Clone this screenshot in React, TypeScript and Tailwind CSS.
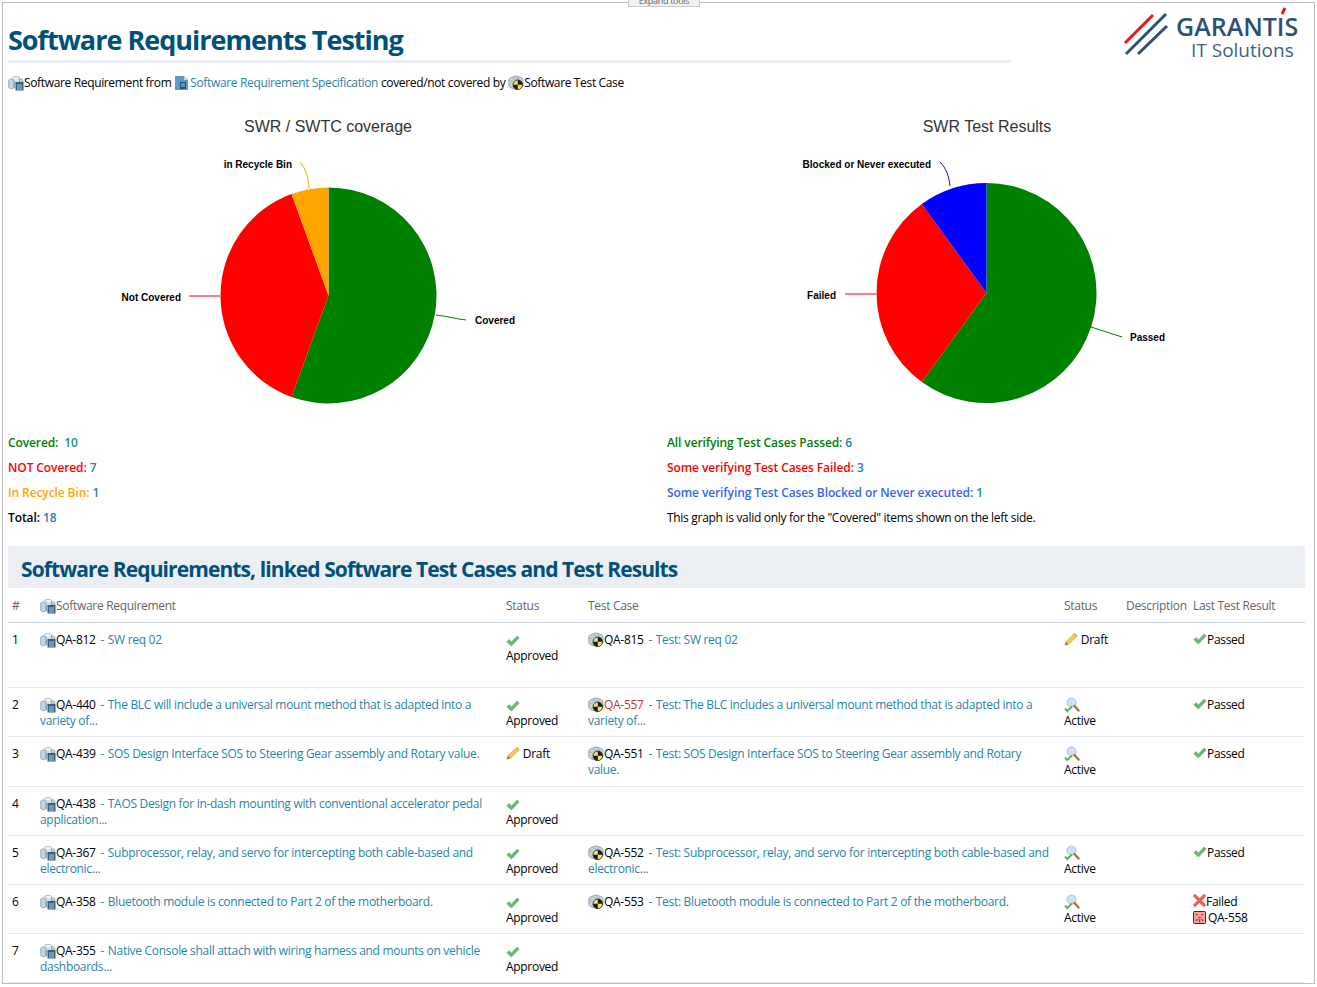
import type { ReactNode } from "react";

const FONT = "font-['Open_Sans','Liberation_Sans',sans-serif]";

function ReqIcon() {
  return (
    <svg viewBox="0 0 16 16" className="inline-block h-4 w-4 shrink-0 align-[-4px]">
      <path d="M.7 5.500C.7 3.500 6 3.500 6 5.500v7c0 1.600-5.300 1.600-5.300 0z" fill="#c4d5e2" stroke="#7d98ad" strokeWidth=".7" />
      <path d="M4.500 3C4.500 1 11.500 1 11.500 3v5h-5v5H6V5.500C6 4.300 4.500 4 4.500 3z" fill="#d6e3ec" stroke="#7d98ad" strokeWidth=".7" />
      <ellipse cx="8" cy="3" rx="3" ry="1.200" fill="#eef4f8" />
      <path d="M11.500 4C13 3.500 15 4 15 5.500V7h-3.500z" fill="#c4d5e2" stroke="#7d98ad" strokeWidth=".6" />
      <rect x="7.500" y="7" width="8" height="8.500" fill="#33607f" />
      <path d="M9 10h5M9 12h5M9 14h5" stroke="#dfeaf2" strokeWidth=".8" />
    </svg>
  );
}

function TestIcon() {
  return (
    <svg viewBox="0 0 16 16" className="inline-block h-4 w-4 shrink-0 align-[-4px]">
      <path d="M.8 5C.8 3 4 2 5 2 6 .8 10 .8 11 2c1.500 0 4 1 4 3v5c0 2-3 4-7 4-4 0-7.200-2-7.200-4z" fill="#c7d3dc" stroke="#76899a" strokeWidth=".7" />
      <path d="M5 2.500c0 2 6 2 6 0M1 5.500c1 1 3 1 3.500.5" fill="none" stroke="#8a9cab" strokeWidth=".6" />
      <circle cx="9.800" cy="9.800" r="4.800" fill="#efe26a" stroke="#1c1c1c" strokeWidth=".8" />
      <path d="M9.800 9.800V5a4.800 4.800 0 0 1 4.800 4.800zM9.800 9.800v4.800A4.800 4.800 0 0 1 5 9.800z" fill="#1c1c1c" />
    </svg>
  );
}

function SpecIcon() {
  return (
    <svg viewBox="0 0 16 16" className="inline-block h-4 w-4 shrink-0 align-[-4px]">
      <path d="M1 1h9l4 4v10H1z" fill="#5b9dc9" />
      <path d="M10 1v4h4z" fill="#b8d8ee" />
      <rect x="6" y="7" width="6" height="7" fill="#2b4f6d" />
      <path d="M7 9h4M7 11h4" stroke="#dbe7f0" strokeWidth=".8" />
    </svg>
  );
}

function CheckIcon({ className = "" }: { className?: string }) {
  return (
    <svg viewBox="0 0 14 12" className={`inline-block h-[12px] w-[14px] shrink-0 ${className}`}>
      <path d="M.8 6.800 3 4.600l2.400 2.300L11.200 1l2 2-7.800 8z" fill="#6ab972" stroke="#559f5e" strokeWidth=".5" />
    </svg>
  );
}

function PencilIcon() {
  return (
    <svg viewBox="0 0 16 16" className="inline-block h-[14px] w-[14px] shrink-0 align-[-2px]">
      <path d="M1 15l1.200-4L11.500 2l3 3-9.300 9z" fill="#f2c75c" stroke="#d29f3c" strokeWidth=".7" />
      <path d="M1 15l1.200-4 2.900 3z" fill="#a9794a" />
      <path d="M11.500 2l3 3 1-1-3-3z" fill="#e6a768" />
    </svg>
  );
}

function ActiveIcon() {
  return (
    <svg viewBox="0 0 16 16" className="block h-4 w-4">
      <circle cx="7.500" cy="5.500" r="4.500" fill="#cfe2f5" stroke="#a6c1da" strokeWidth="1" />
      <path d="M10.500 9l4 4.500" stroke="#a9743f" strokeWidth="2.400" strokeLinecap="round" />
      <path d="M1 11.500l2.200 2.500L8 9.500" fill="none" stroke="#62b36a" strokeWidth="2" />
    </svg>
  );
}

function FailIcon() {
  return (
    <svg viewBox="0 0 13 13" className="inline-block h-[13px] w-[13px] shrink-0 align-[-1px]">
      <path d="M2 2l9 9M11 2l-9 9" stroke="#ee5f5f" strokeWidth="3.200" strokeLinecap="square" />
    </svg>
  );
}

function BugIcon() {
  return (
    <svg viewBox="0 0 14 14" className="mr-[2px] inline-block h-[13px] w-[13px] shrink-0 align-[-2px]">
      <rect x=".5" y=".5" width="13" height="13" rx="1" fill="#f3a3a3" stroke="#2a1414" />
      <path d="M3 4h2M9 4h2M5.500 7h3M3 10.500l2-1.500M11 10.500 9 9M7 9v3" stroke="#c62020" strokeWidth="1.300" />
    </svg>
  );
}

function Link({ children }: { children: ReactNode }) {
  return <span className="text-[#2a84a8]">{children}</span>;
}

function Title({ children }: { children: ReactNode }) {
  return (
    <Link>
      <span className="mr-px ml-[2px]">-</span> {children}
    </Link>
  );
}

function Pie({
  cx,
  cy,
  r,
  slices,
}: {
  cx: number;
  cy: number;
  r: number;
  slices: { share: number; color: string }[];
}) {
  let start = 0;
  return (
    <>
      {slices.map((s) => {
        const end = start + s.share;
        const point = (t: number) => {
          const a = t * 2 * Math.PI;
          return `${cx + r * Math.sin(a)} ${cy - r * Math.cos(a)}`;
        };
        const d = `M${cx} ${cy}L${point(start)}A${r} ${r} 0 ${s.share > 0.5 ? 1 : 0} 1 ${point(end)}Z`;
        start = end;
        return <path key={s.color} d={d} fill={s.color} />;
      })}
    </>
  );
}

const labelClass = "font-['Liberation_Sans',sans-serif] text-[10px] font-bold tracking-normal";
const titleClass = "font-['Liberation_Sans',sans-serif] text-[16px] tracking-normal";

function CoverageChart() {
  return (
    <svg viewBox="8 105 639 320" className="h-[320px] w-[639px]">
      <text x="328" y="132" textAnchor="middle" fill="#333" className={titleClass}>
        SWR / SWTC coverage
      </text>
      <Pie
        cx={328.5}
        cy={295.5}
        r={108}
        slices={[
          { share: 10 / 18, color: "#008000" },
          { share: 7 / 18, color: "#ff0000" },
          { share: 1 / 18, color: "#ffa500" },
        ]}
      />
      <path d="M436 315C446 316 456 319 466 320" fill="none" stroke="#008000" />
      <path d="M220 296H189" fill="none" stroke="#ff0000" />
      <path d="M309 188C308 178 306 168 300 162" fill="none" stroke="#ffa500" />
      <text x="475" y="324" className={labelClass}>Covered</text>
      <text x="181" y="301" textAnchor="end" className={labelClass}>Not Covered</text>
      <text x="292" y="168" textAnchor="end" className={labelClass}>in Recycle Bin</text>
    </svg>
  );
}

function ResultsChart() {
  return (
    <svg viewBox="667 105 639 320" className="h-[320px] w-[639px]">
      <text x="987" y="132" textAnchor="middle" fill="#333" className={titleClass}>
        SWR Test Results
      </text>
      <Pie
        cx={986.5}
        cy={293}
        r={110}
        slices={[
          { share: 0.6, color: "#008000" },
          { share: 0.3, color: "#ff0000" },
          { share: 0.1, color: "#0000ff" },
        ]}
      />
      <path d="M1091 327C1101 330 1112 334 1122 337" fill="none" stroke="#008000" />
      <path d="M876 294H845" fill="none" stroke="#ff0000" />
      <path d="M950 186C949 176 946 168 940 162" fill="none" stroke="#0000ff" />
      <text x="1130" y="341" className={labelClass}>Passed</text>
      <text x="836" y="299" textAnchor="end" className={labelClass}>Failed</text>
      <text x="931" y="168" textAnchor="end" className={labelClass}>Blocked or Never executed</text>
    </svg>
  );
}

function Logo() {
  return (
    <svg viewBox="1118 4 187 60" className="mt-[1px] h-[60px] w-[187px]">
      <path d="M1125 43l28-28" stroke="#f0131e" strokeWidth="3" />
      <path d="M1126 54l40-40M1138 54l29-28" stroke="#2d5170" strokeWidth="3" />
      <path d="M1282 14l3-6" stroke="#f0131e" strokeWidth="3" />
      <text x="1176" y="36" fill="#2d5170" className="font-['Open_Sans',sans-serif] text-[25px] font-semibold tracking-normal">
        GARANTIS
      </text>
      <text x="1191" y="57" fill="#3f6280" className="font-['Open_Sans',sans-serif] text-[19px] tracking-normal">
        IT Solutions
      </text>
    </svg>
  );
}

type Row = {
  id: string;
  title: string;
  status: "Approved" | "Draft";
  test?: { id: string; title: string; broken?: boolean; status: "Active" | "Draft" };
  result?: "Passed" | "Failed";
  bug?: string;
  height: string;
};

const rows: Row[] = [
  {
    id: "QA-812",
    title: "SW req 02",
    status: "Approved",
    test: { id: "QA-815", title: "Test: SW req 02", status: "Draft" },
    result: "Passed",
    height: "h-[65px]",
  },
  {
    id: "QA-440",
    title: "The BLC will include a universal mount method that is adapted into a variety of...",
    status: "Approved",
    test: {
      id: "QA-557",
      title: "Test: The BLC includes a universal mount method that is adapted into a variety of...",
      broken: true,
      status: "Active",
    },
    result: "Passed",
    height: "h-[49px]",
  },
  {
    id: "QA-439",
    title: "SOS Design Interface SOS to Steering Gear assembly and Rotary value.",
    status: "Draft",
    test: {
      id: "QA-551",
      title: "Test: SOS Design Interface SOS to Steering Gear assembly and Rotary value.",
      status: "Active",
    },
    result: "Passed",
    height: "h-[50px]",
  },
  {
    id: "QA-438",
    title: "TAOS Design for in-dash mounting with conventional accelerator pedal application...",
    status: "Approved",
    height: "h-[49px]",
  },
  {
    id: "QA-367",
    title: "Subprocessor, relay, and servo for intercepting both cable-based and electronic...",
    status: "Approved",
    test: {
      id: "QA-552",
      title: "Test: Subprocessor, relay, and servo for intercepting both cable-based and electronic...",
      status: "Active",
    },
    result: "Passed",
    height: "h-[49px]",
  },
  {
    id: "QA-358",
    title: "Bluetooth module is connected to Part 2 of the motherboard.",
    status: "Approved",
    test: {
      id: "QA-553",
      title: "Test: Bluetooth module is connected to Part 2 of the motherboard.",
      status: "Active",
    },
    result: "Failed",
    bug: "QA-558",
    height: "h-[49px]",
  },
  {
    id: "QA-355",
    title: "Native Console shall attach with wiring harness and mounts on vehicle dashboards...",
    status: "Approved",
    height: "h-[49px]",
  },
];

function StatusCell({ status }: { status: "Approved" | "Draft" | "Active" }) {
  if (status === "Draft") {
    return (
      <span>
        <PencilIcon /> Draft
      </span>
    );
  }
  return (
    <>
      {status === "Active" ? <ActiveIcon /> : <CheckIcon className="mt-[2px] mb-px block" />}
      <div>{status}</div>
    </>
  );
}

export default function App() {
  return (
    <div className={`${FONT} relative h-[987px] w-[1317px] overflow-hidden bg-white text-[12px] leading-4 tracking-[-0.3px] text-black`}>
      <div className="absolute top-0 left-[628px] h-[7px] w-[72px] overflow-hidden border border-t-0 border-[#ccc] bg-[#f2f2f2] text-center text-[9px] leading-[2px] text-[#666]">
        Expand tools
      </div>
      <div className="mt-[2px] ml-[2px] h-[982px] w-[1313px] overflow-hidden border border-[#bdbdbd] pr-[8px] pl-[5px]">
        <div className="flex w-[1297px] items-start justify-between">
          <div className="w-[1003px]">
            <h1 className="mt-[19px] border-b-[3px] border-[#ebeff3] pb-[2px] text-[27px] leading-9 font-bold tracking-[-1px] text-[#00507a]">
              Software Requirements Testing
            </h1>
            <p className="mt-[12px] h-4 tracking-[-0.35px]">
              <ReqIcon />
              Software Requirement from <SpecIcon />
              <Link>Software Requirement Specification</Link> covered/not covered by <TestIcon />
              Software Test Case
            </p>
          </div>
          <Logo />
        </div>

        <div className="mt-[14px] grid w-[1297px] grid-cols-[639px_639px] gap-x-[20px]">
          <CoverageChart />
          <ResultsChart />
        </div>

        <div className="mt-[5px] grid w-[1297px] grid-cols-[639px_639px] gap-x-[20px] font-semibold tracking-[-0.1px] [&_p]:flex [&_p]:h-[25px] [&_p]:items-center [&_p]:whitespace-pre">
          <div>
            <p className="text-[#008000]">Covered:  <Link>10</Link></p>
            <p className="text-[#ff0000]">NOT Covered: <Link>7</Link></p>
            <p className="text-[#ffa500]">In Recycle Bin: <Link>1</Link></p>
            <p>Total: <Link>18</Link></p>
          </div>
          <div>
            <p className="text-[#008000]">All verifying Test Cases Passed: <Link>6</Link></p>
            <p className="text-[#ff0000]">Some verifying Test Cases Failed: <Link>3</Link></p>
            <p className="text-[#3366ff]">Some verifying Test Cases Blocked or Never executed: <Link>1</Link></p>
            <p className="font-normal tracking-[-0.3px]">This graph is valid only for the "Covered" items shown on the left side.</p>
          </div>
        </div>

        <h2 className="mt-[16px] flex h-[42px] w-[1297px] items-center bg-[#ebeff3] pt-[3px] pl-[13px] text-[21px] font-bold tracking-[-0.9px] text-[#00507a]">
          Software Requirements, linked Software Test Cases and Test Results
        </h2>

        <table className="w-[1297px] table-fixed border-collapse">
          <colgroup>
            <col className="w-[28px]" />
            <col className="w-[466px]" />
            <col className="w-[82px]" />
            <col className="w-[476px]" />
            <col className="w-[62px]" />
            <col className="w-[67px]" />
            <col className="w-[116px]" />
          </colgroup>
          <thead>
            <tr className="h-[34px] border-b border-[#c9d1d6] text-left text-[#666] [&_th]:px-1 [&_th]:pt-[3px] [&_th]:font-normal">
              <th>#</th>
              <th>
                <ReqIcon />
                Software Requirement
              </th>
              <th>Status</th>
              <th>Test Case</th>
              <th>Status</th>
              <th>Description</th>
              <th>Last Test Result</th>
            </tr>
          </thead>
          <tbody>
            {rows.map((row, i) => (
              <tr
                key={row.id}
                className={`${row.height} border-b border-[#e6e9ec] align-top [&_td]:pt-[9px] [&_td]:pl-1`}
              >
                <td>{i + 1}</td>
                <td className="pr-1">
                  <ReqIcon />
                  {row.id} <Title>{row.title}</Title>
                </td>
                <td className="pr-1">
                  <StatusCell status={row.status} />
                </td>
                <td className="pr-[8px]">
                  {row.test && (
                    <>
                      <TestIcon />
                      <span className={row.test.broken ? "text-[#c0392b]" : ""}>{row.test.id}</span>{" "}
                      <Title>{row.test.title}</Title>
                    </>
                  )}
                </td>
                <td>{row.test && <StatusCell status={row.test.status} />}</td>
                <td />
                <td>
                  {row.result === "Passed" && (
                    <>
                      <CheckIcon className="align-[-1px]" />
                      Passed
                    </>
                  )}
                  {row.result === "Failed" && (
                    <>
                      <FailIcon />
                      Failed
                      <div>
                        <BugIcon />
                        {row.bug}
                      </div>
                    </>
                  )}
                </td>
              </tr>
            ))}
          </tbody>
        </table>
      </div>
    </div>
  );
}
